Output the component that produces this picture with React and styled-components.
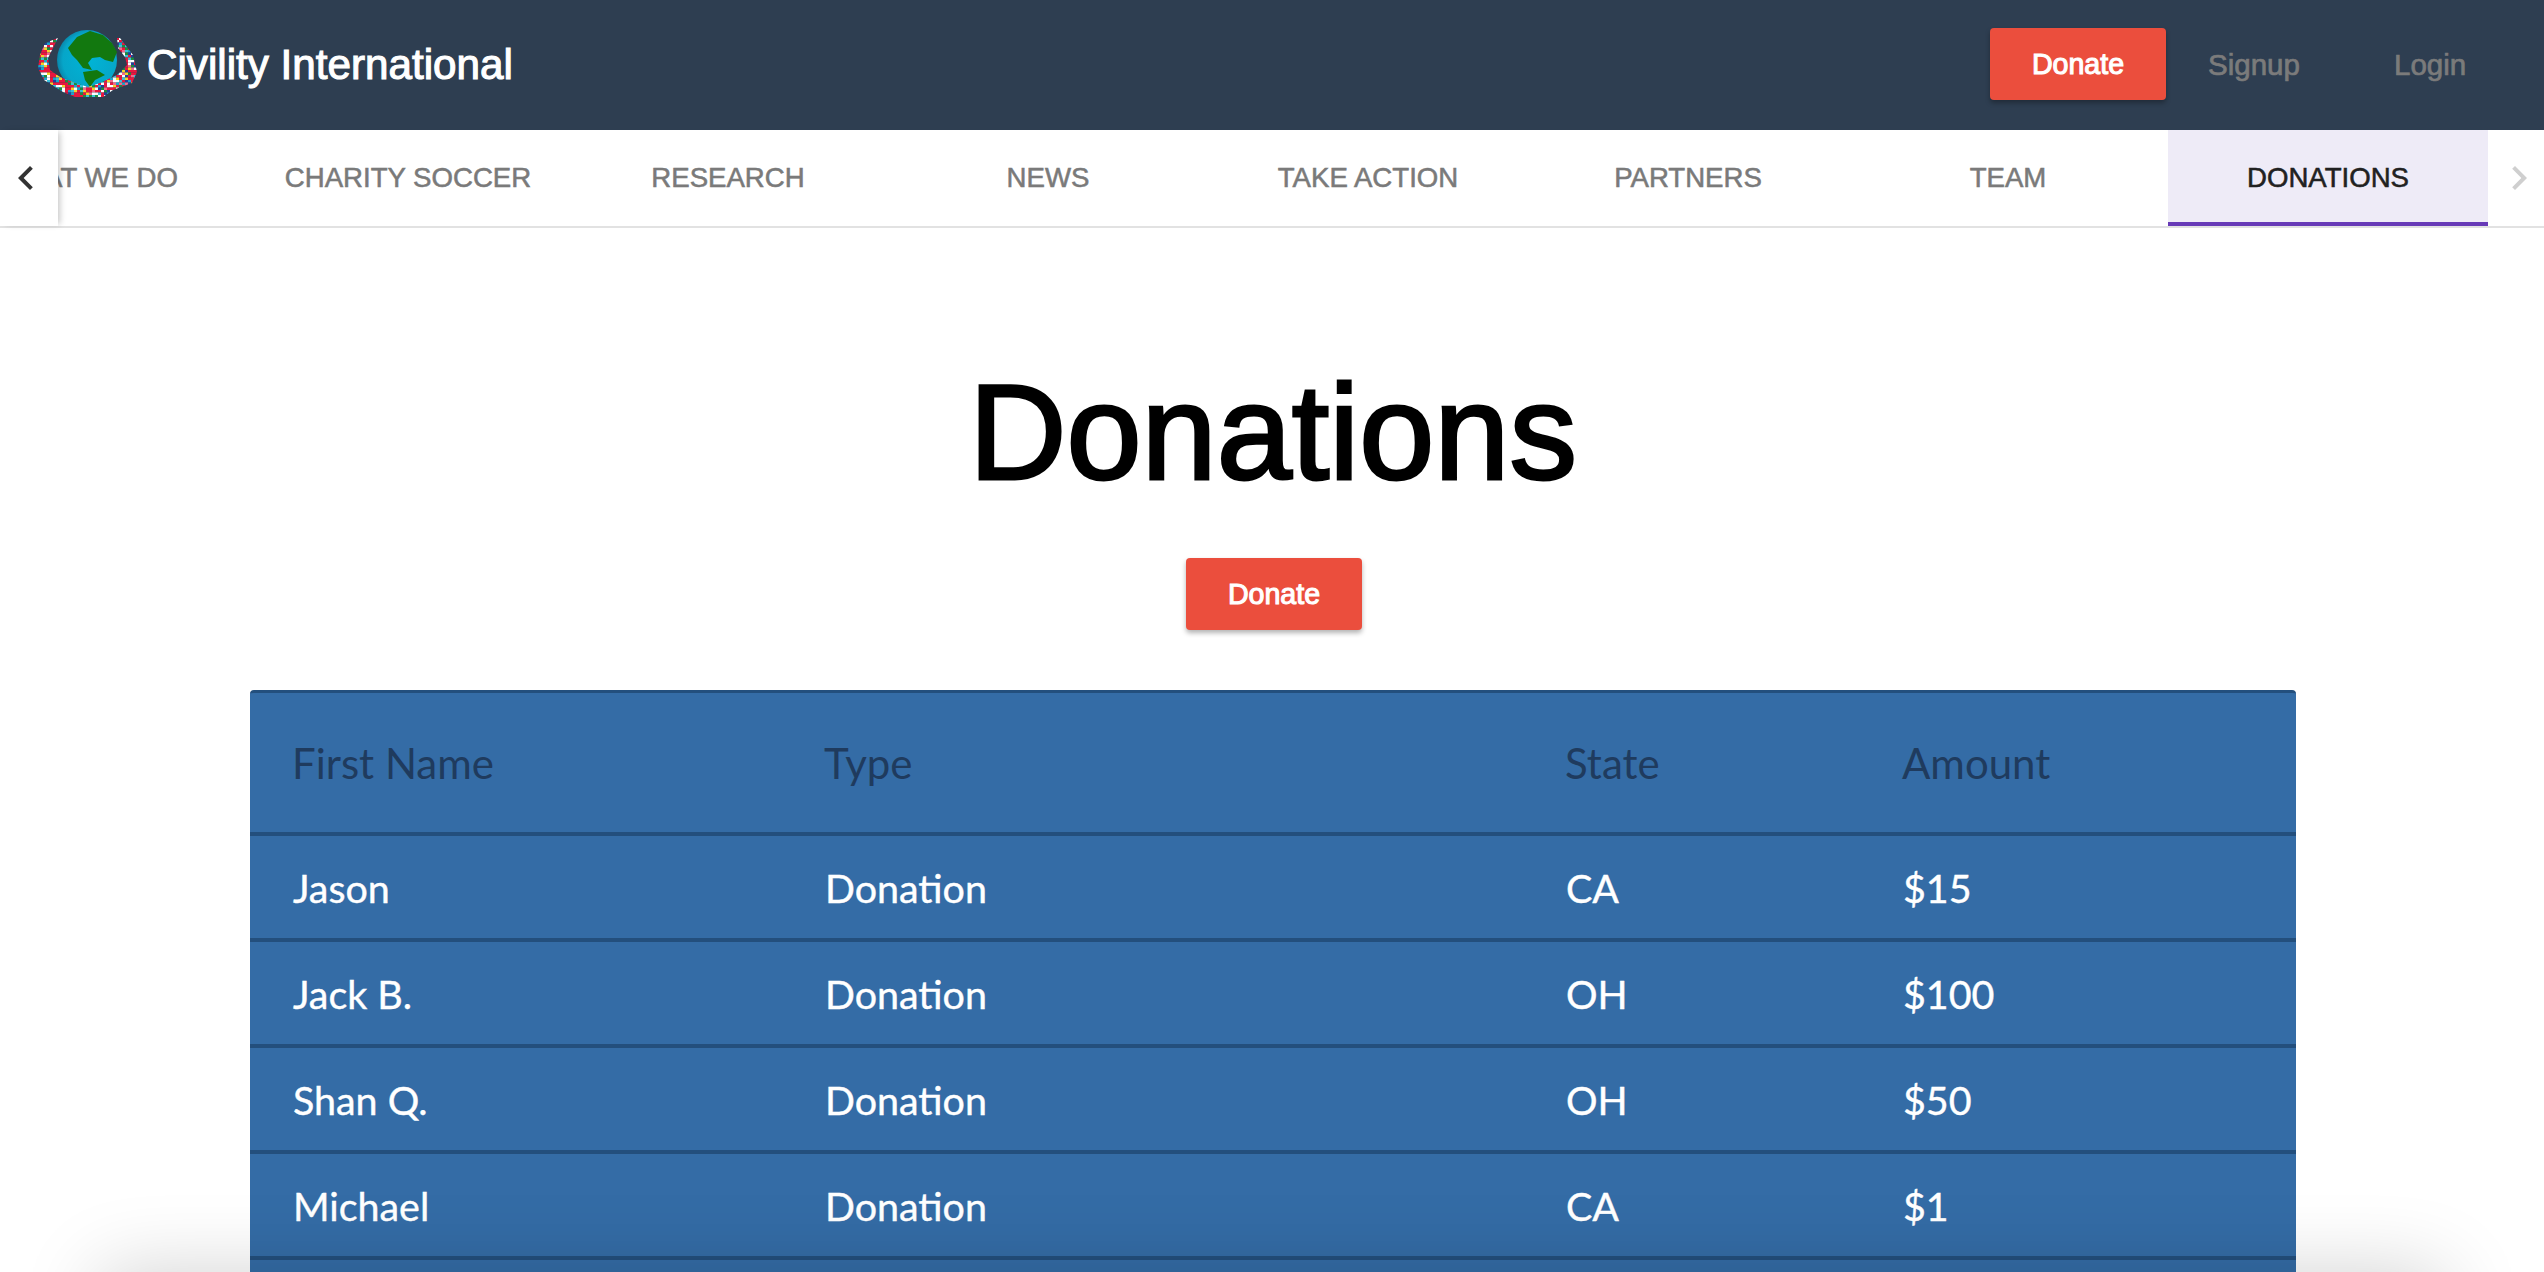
import React from "react";
import styled, { createGlobalStyle } from "styled-components";

const donors = [
  { name: "Jason", type: "Donation", state: "CA", amount: "$15" },
  { name: "Jack B.", type: "Donation", state: "OH", amount: "$100" },
  { name: "Shan Q.", type: "Donation", state: "OH", amount: "$50" },
  { name: "Michael", type: "Donation", state: "CA", amount: "$1" },
];

const tabs = [
  "What we do",
  "Charity Soccer",
  "Research",
  "News",
  "Take Action",
  "Partners",
  "Team",
  "Donations",
];

const flagColors = [
  "#e8173f", "#ffffff", "#1aa5c9", "#f5d327", "#e8173f", "#1f8a3c",
  "#f7f7f7", "#e8173f", "#f06a8c", "#23409a", "#e8173f", "#39c0d8",
];

const flagTiles = [];
for (let row = 0; row < 28; row++) {
  for (let col = 0; col < 34; col++) {
    flagTiles.push({
      x: col * 3,
      y: row * 2.5,
      fill: flagColors[(row * 7 + col * 5 + ((row * col) % 5)) % flagColors.length],
    });
  }
}

const Logo = () => (
  <svg width="100" height="68" viewBox="0 0 100 68">
    <defs>
      <radialGradient id="ocean" cx="55%" cy="50%" r="58%">
        <stop offset="0%" stopColor="#00b4d6" />
        <stop offset="78%" stopColor="#06a6c9" />
        <stop offset="100%" stopColor="#0a7ba0" />
      </radialGradient>
      <clipPath id="hands">
        <path d="M20 8 L7 13 L2 25 L0 38 L6 50 L25 62 L37 67 L65 67 L75 60 L94 53 L99 42 L95 25 L82 8 L79 8 L80 18 L87 27 L89 35 L79 45 L62 53 L50 57 L37 53 L22 47 L12 40 L10 28 L15 18 Z" />
      </clipPath>
    </defs>
    <circle cx="49" cy="30" r="30" fill="url(#ocean)" />
    <path
      d="M30 18 L39 7 L52 1 L65 5 L74 13 L79 22 L75 32 L67 30 L62 27 L54 28 L50 33 L54 40 L45 38 L39 30 L34 25 Z"
      fill="#12780f"
    />
    <path d="M45 42 L59 40 L67 45 L57 50 L52 57 L47 50 Z" fill="#12780f" />
    <g clipPath="url(#hands)">
      {flagTiles.map((tile) => (
        <rect
          key={`${tile.x}-${tile.y}`}
          x={tile.x}
          y={tile.y}
          width="3"
          height="2.5"
          fill={tile.fill}
        />
      ))}
    </g>
  </svg>
);

const Chevron = ({ flip, color }) => (
  <svg
    width="48"
    height="48"
    viewBox="0 0 24 24"
    fill={color}
    style={flip ? { transform: "scaleX(-1)" } : undefined}
  >
    <path d="M15.41 7.41L14 6l-6 6 6 6 1.41-1.41L10.83 12z" />
  </svg>
);

const App = () => (
  <Page>
    <GlobalStyle />
    <NavBar>
      <Brand>
        <Logo />
        <BrandName>Civility International</BrandName>
      </Brand>
      <NavActions>
        <RedButton $inNav>Donate</RedButton>
        <NavLink $width={91}>Signup</NavLink>
        <NavLink $width={72}>Login</NavLink>
      </NavActions>
    </NavBar>

    <TabBar>
      <ScrollButton $left>
        <Chevron color="#333" />
      </ScrollButton>
      <TabScroller>
        {tabs.map((tab) => (
          <Tab key={tab} $active={tab === "Donations"}>
            {tab}
          </Tab>
        ))}
      </TabScroller>
      <ScrollButton>
        <Chevron flip color="#cfcfcf" />
      </ScrollButton>
    </TabBar>

    <Content>
      <Title>Donations</Title>
      <RedButton>Donate</RedButton>
      <Table>
        <colgroup>
          <col style={{ width: 532 }} />
          <col style={{ width: 741 }} />
          <col style={{ width: 337 }} />
          <col />
        </colgroup>
        <thead>
          <tr>
            <HeadCell>First Name</HeadCell>
            <HeadCell>Type</HeadCell>
            <HeadCell>State</HeadCell>
            <HeadCell>Amount</HeadCell>
          </tr>
        </thead>
        <tbody>
          {donors.map((donor) => (
            <tr key={donor.name}>
              <Cell>{donor.name}</Cell>
              <Cell>{donor.type}</Cell>
              <Cell>{donor.state}</Cell>
              <Cell>{donor.amount}</Cell>
            </tr>
          ))}
          {/* next row starts just above the fold, its text is below it */}
          <tr>
            <Cell colSpan={4} />
          </tr>
        </tbody>
      </Table>
    </Content>

    <BottomEdge />
  </Page>
);

const GlobalStyle = createGlobalStyle`
  html, body {
    margin: 0;
    padding: 0;
    height: 100%;
    overflow: hidden;
    background: #fff;
    font-family: "Liberation Sans", Arial, sans-serif;
  }
`;

const Page = styled.div`
  height: 1272px;
  overflow: hidden;
`;

const NavBar = styled.header`
  height: 130px;
  background: #2e3e51;
  display: flex;
  align-items: center;
  justify-content: space-between;
  padding: 0 40px 0 38px;
`;

const Brand = styled.div`
  display: flex;
  align-items: center;
  gap: 10px;
  height: 130px;

  svg {
    margin-top: -2px;
    margin-right: -1px;
  }
`;

const BrandName = styled.span`
  color: #fff;
  font-size: 42.2px;
  -webkit-text-stroke: 1.1px #fff;
`;

const NavActions = styled.nav`
  display: flex;
  align-items: center;
`;

const RedButton = styled.button`
  display: block;
  width: 176px;
  height: 72px;
  margin-top: ${(props) => (props.$inNav ? "-2px" : "0")};
  margin-left: ${(props) => (props.$inNav ? "0" : "2px")};
  border: 0;
  border-radius: 4px;
  background: #eb4e3d;
  color: #fff;
  font-family: inherit;
  font-size: 28.6px;
  font-weight: 400;
  -webkit-text-stroke: 1.1px #fff;
  box-shadow: 0 3px 5px rgba(0, 0, 0, 0.3);
`;

const NavLink = styled.a`
  width: ${(props) => props.$width}px;
  margin-left: 42px;
  margin-right: 53px;
  color: #7b7b7b;
  font-size: 29.5px;
  -webkit-text-stroke: 0.7px #7b7b7b;

  &:last-child {
    margin-right: 38px;
  }
`;

const TabBar = styled.div`
  height: 98px;
  display: flex;
  box-sizing: border-box;
  border-bottom: 2px solid #e2e2e2;
  background: #fff;
`;

const ScrollButton = styled.div`
  flex: 0 0 ${(props) => (props.$left ? "58px" : "56px")};
  box-sizing: border-box;
  padding: ${(props) => (props.$left ? "0 6px 0 0" : "0 0 0 6px")};
  display: flex;
  align-items: center;
  justify-content: center;
  position: relative;
  background: #fff;
  box-shadow: ${(props) =>
    props.$left ? "4px 0 6px -2px rgba(0, 0, 0, 0.22)" : "none"};
`;

const TabScroller = styled.div`
  flex: 1;
  display: flex;
  overflow: hidden;
`;

const Tab = styled.div`
  flex: 0 0 320px;
  display: flex;
  align-items: center;
  justify-content: center;
  box-sizing: border-box;
  padding-top: 3px;
  font-size: 27.6px;
  -webkit-text-stroke: 0.55px currentColor;
  text-transform: uppercase;
  color: ${(props) => (props.$active ? "#212121" : "#7a7a7a")};
  background: ${(props) => (props.$active ? "#eeebf7" : "transparent")};
  border-bottom: 4px solid ${(props) => (props.$active ? "#673ab7" : "transparent")};

  &:first-child {
    margin-left: -130px;
  }
`;

const Content = styled.main`
  display: flex;
  flex-direction: column;
  align-items: center;
  padding-left: 2px;
`;

const Title = styled.h1`
  margin: 128px 0 48px;
  font-size: 135px;
  line-height: 154px;
  font-weight: 400;
  color: #000;
  -webkit-text-stroke: 3px #000;
`;

const Table = styled.table`
  width: 2046px;
  margin-top: 60px;
  table-layout: fixed;
  border-collapse: separate;
  border-spacing: 0;
  border-radius: 4px;
  border-top: 3px solid #234f7d;
  background: #346ca6;
  font-family: Lato, sans-serif;
`;

const HeadCell = styled.th`
  height: 139px;
  padding: 0 0 0 42px;
  text-align: left;
  font-size: 42px;
  font-weight: 400;
  color: #1f3b5e;
  border-bottom: 4px solid #234f7d;
`;

const Cell = styled.td`
  height: 101px;
  padding: 1px 0 0 43px;
  font-size: 39.4px;
  color: #fff;
  -webkit-text-stroke: 0.4px #fff;
  border-bottom: 4px solid #234f7d;
`;

const BottomEdge = styled.div`
  position: fixed;
  left: 100px;
  right: 100px;
  top: 1272px;
  height: 100px;
  box-shadow: 0 0 80px rgba(0, 0, 0, 0.18);
`;

export default App;
